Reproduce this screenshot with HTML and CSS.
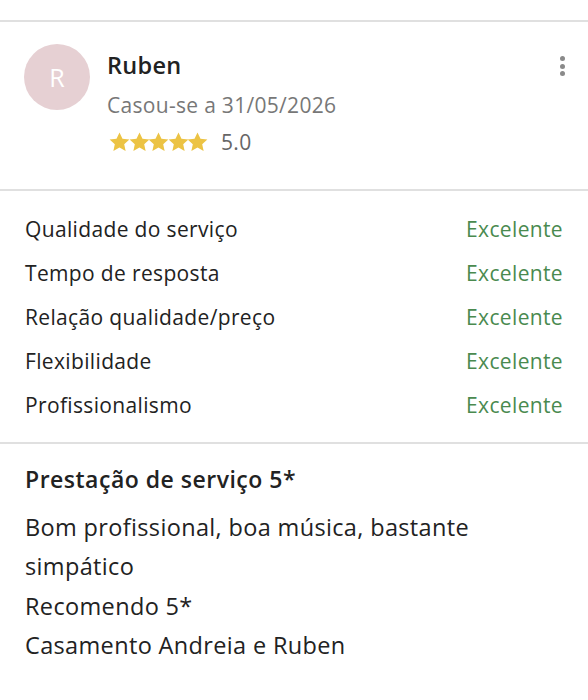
FILE: index.html
```html
<!doctype html>
<html>
<head>
<meta charset="UTF-8" />
<title>Opinião</title>
<link rel="stylesheet" href="styles.css">
</head>
<body>
	<div id="review">
		<div class="head">
			<div class="avatar">R</div>
			<div class="info">
				<div class="name">Ruben</div>
				<div class="date">Casou-se a 31/05/2026</div>
				<div class="rating">
					<span class="stars">
						<svg viewBox="0 0 24 24"><path d="M12 1.5l3.1 6.6 7.2.8-5.4 4.9 1.5 7.1L12 17.3l-6.4 3.6 1.5-7.1L1.7 8.9l7.2-.8z"/></svg>
						<svg viewBox="0 0 24 24"><path d="M12 1.5l3.1 6.6 7.2.8-5.4 4.9 1.5 7.1L12 17.3l-6.4 3.6 1.5-7.1L1.7 8.9l7.2-.8z"/></svg>
						<svg viewBox="0 0 24 24"><path d="M12 1.5l3.1 6.6 7.2.8-5.4 4.9 1.5 7.1L12 17.3l-6.4 3.6 1.5-7.1L1.7 8.9l7.2-.8z"/></svg>
						<svg viewBox="0 0 24 24"><path d="M12 1.5l3.1 6.6 7.2.8-5.4 4.9 1.5 7.1L12 17.3l-6.4 3.6 1.5-7.1L1.7 8.9l7.2-.8z"/></svg>
						<svg viewBox="0 0 24 24"><path d="M12 1.5l3.1 6.6 7.2.8-5.4 4.9 1.5 7.1L12 17.3l-6.4 3.6 1.5-7.1L1.7 8.9l7.2-.8z"/></svg>
					</span>
					<span class="score">5.0</span>
				</div>
			</div>
			<a href="#" class="more"><i></i><i></i><i></i></a>
		</div>
		<div class="scores">
			<div class="row"><span>Qualidade do serviço</span><span class="value">Excelente</span></div>
			<div class="row"><span>Tempo de resposta</span><span class="value">Excelente</span></div>
			<div class="row"><span>Relação qualidade/preço</span><span class="value">Excelente</span></div>
			<div class="row"><span>Flexibilidade</span><span class="value">Excelente</span></div>
			<div class="row"><span>Profissionalismo</span><span class="value">Excelente</span></div>
		</div>
		<div class="text">
			<h2>Prestação de serviço 5*</h2>
			<p>Bom profissional, boa música, bastante simpático<br>Recomendo 5*<br>Casamento Andreia e Ruben</p>
		</div>
	</div>
</body>
</html>
```

FILE: styles.css
```css
html, body, h2, p, div{
	margin:0;
	padding:0;
}
body{
	font-family: "Open Sans", Lato, sans-serif;
	color:#222;
	background:#fff;
}
#review{
	margin-top:20px;
	border-top:2px solid #e0e0e0;
}
.head{
	display:flex;
	align-items:flex-start;
	padding:22px 25px 0 24px;
	height:145px;
	border-bottom:2px solid #e0e0e0;
}
.avatar{
	width:66px;
	height:66px;
	border-radius:50%;
	background:#e6d0d3;
	color:#fff;
	font-size:25px;
	display:flex;
	align-items:center;
	justify-content:center;
	flex-shrink:0;
}
.info{
	margin-left:17px;
	flex:1;
}
.name{
	font-size:23.5px;
	font-weight:600;
	letter-spacing:0.3px;
	line-height:30px;
	margin-top:6px;
}
.date{
	font-size:21px;
	color:#777;
	letter-spacing:0.3px;
	line-height:30px;
	margin-top:10px;
}
.rating{
	display:flex;
	align-items:center;
	margin-top:10px;
}
.stars{
	display:flex;
	margin-left:1px;
}
.stars svg{
	width:23px;
	height:23px;
	margin-right:-3.4px;
	fill:#ecc344;
}
.score{
	font-size:21px;
	color:#666;
	letter-spacing:0.3px;
	margin-left:15px;
	line-height:24px;
}
.more{
	display:flex;
	flex-direction:column;
	gap:2.5px;
	margin-top:12px;
	margin-right:-2px;
}
.more i{
	display:block;
	width:5px;
	height:5px;
	border-radius:50%;
	background:#8a8a8a;
}
.scores{
	padding:16px 25px 15px;
	border-bottom:2px solid #e0e0e0;
}
.row{
	display:flex;
	justify-content:space-between;
	align-items:center;
	height:44px;
	font-size:21px;
	letter-spacing:0.35px;
}
.row .value{
	color:#4a8a4f;
}
.text{
	padding:20px 25px;
}
.text h2{
	font-size:23px;
	line-height:30px;
	font-weight:600;
	letter-spacing:0.5px;
}
.text p{
	font-size:23.5px;
	letter-spacing:0.35px;
	line-height:39.3px;
	margin-top:14px;
	padding-right:80px;
}
```
